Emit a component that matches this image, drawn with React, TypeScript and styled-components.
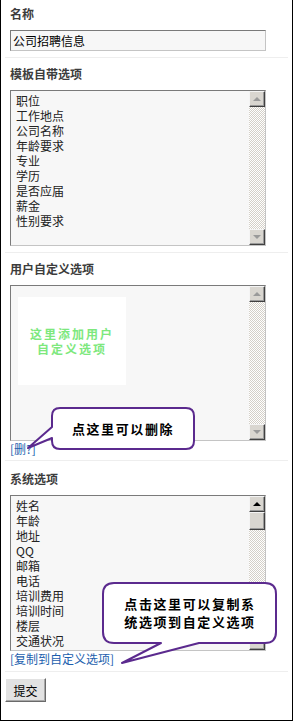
import { createGlobalStyle, styled } from 'styled-components';

const GlobalStyle = createGlobalStyle`
    html, body {
        margin: 0;
        padding: 0;
        background: #ffffff;
    }
    body {
        font-family: "Noto Sans CJK SC", "Noto Sans", sans-serif;
        font-size: 12px;
        color: #222;
    }
`;

const PURPLE = '#5b2a8e';

const Frame = styled.div`
    position: relative;
    box-sizing: border-box;
    width: 293px;
    height: 721px;
    border: 1px solid #000;
    border-top: none;
    padding: 0 4px;
    overflow: hidden;
`;

const Section = styled.div<{ $top?: number; $bottom?: number }>`
    padding: ${(p) => p.$top ?? 8}px 5px ${(p) => p.$bottom ?? 6}px;
    border-bottom: 1px solid #eeeeee;
`;

const Label = styled.div`
    font-size: 12px;
    line-height: 16px;
    font-weight: 700;
    color: #3c3c3c;
    margin-bottom: 8px;
`;

const TextInput = styled.div`
    box-sizing: border-box;
    width: 256px;
    height: 21px;
    padding: 0 2px;
    border: 1px solid #7a7a7a;
    border-right-color: #c4c4c4;
    border-bottom-color: #c4c4c4;
    background: #f7f7f7;
    font-size: 12px;
    line-height: 19px;
    color: #000;
`;

const ListBox = styled.div`
    box-sizing: border-box;
    display: flex;
    width: 256px;
    height: 156px;
    border: 1px solid #7a7a7a;
    border-right-color: #c4c4c4;
    border-bottom-color: #c4c4c4;
    background: #f7f7f7;
`;

const ListContent = styled.div<{ $pad?: string }>`
    flex: 1;
    overflow: hidden;
    padding: ${(p) => p.$pad ?? '2px 0 0 5px'};
`;

const ListItem = styled.div`
    font-size: 12px;
    line-height: 15px;
    color: #222;
    white-space: nowrap;
`;

const ScrollBar = styled.div`
    display: flex;
    flex-direction: column;
    width: 16px;
    flex: none;
`;

const ScrollButton = styled.div<{ $dir: 'up' | 'down'; $active?: boolean }>`
    box-sizing: border-box;
    width: 16px;
    height: 16px;
    flex: none;
    display: flex;
    align-items: center;
    justify-content: center;
    background: #d9d6d0;
    border: 1px solid #f4f4f4;
    border-right-color: #404040;
    border-bottom-color: #404040;
    box-shadow: inset -1px -1px 0 #9a9a9a;

    &::after {
        content: '';
        width: 0;
        height: 0;
        border-left: 4px solid transparent;
        border-right: 4px solid transparent;
        ${(p) => (p.$dir === 'up' ? 'border-bottom' : 'border-top')}: 4px solid
            ${(p) => (p.$active ? '#000' : '#9a9a9a')};
    }
`;

const ScrollTrack = styled.div`
    flex: 1;
    background-color: #ffffff;
    background-image: repeating-conic-gradient(#d4d0c8 0 25%, #ffffff 0 50%);
    background-size: 2px 2px;
`;

const ScrollThumb = styled.div`
    box-sizing: border-box;
    height: 18px;
    flex: none;
    background: #d9d6d0;
    border: 1px solid #f4f4f4;
    border-right-color: #404040;
    border-bottom-color: #404040;
    box-shadow: inset -1px -1px 0 #9a9a9a;
`;

const HintBox = styled.div`
    width: 108px;
    height: 88px;
    background: #ffffff;
    display: flex;
    align-items: center;
    justify-content: center;
    text-align: center;
    font-size: 12px;
    line-height: 15px;
    font-weight: 700;
    letter-spacing: 2px;
    color: #7de87d;
`;

const ActionLink = styled.a`
    display: block;
    margin-top: 1px;
    font-size: 12px;
    line-height: 14px;
    color: #1d5fae;
    text-decoration: none;
    cursor: pointer;
`;

const ButtonRow = styled.div`
    padding-top: 6px;
`;

const SubmitButton = styled.button`
    box-sizing: border-box;
    width: 41px;
    height: 24px;
    padding: 0;
    background: #e2e2e2;
    border: 1px solid #ffffff;
    border-right-color: #6a6a6a;
    border-bottom-color: #6a6a6a;
    box-shadow: inset -1px -1px 0 #a8a8a8;
    font-family: "Noto Sans CJK SC", sans-serif;
    font-size: 12px;
    color: #000;
`;

const BubbleShape = styled.svg`
    position: absolute;
    overflow: visible;
    pointer-events: none;
`;

const BubbleText = styled.div<{ $left: number; $top: number; $width: number; $height: number }>`
    position: absolute;
    left: ${(p) => p.$left}px;
    top: ${(p) => p.$top}px;
    width: ${(p) => p.$width}px;
    height: ${(p) => p.$height}px;
    display: flex;
    flex-direction: column;
    align-items: center;
    justify-content: center;
    font-size: 13px;
    line-height: 18px;
    font-weight: 700;
    letter-spacing: 1.6px;
    color: #000;
    white-space: nowrap;
`;

function Scroll({ active, thumb }: { active?: boolean; thumb?: boolean }) {
    return (
        <ScrollBar>
            <ScrollButton $dir="up" $active={active} />
            {thumb && <ScrollThumb />}
            <ScrollTrack />
            <ScrollButton $dir="down" $active={active} />
        </ScrollBar>
    );
}

function Callout({
    x,
    y,
    w,
    h,
    d,
    lines,
    text,
}: {
    x: number;
    y: number;
    w: number;
    h: number;
    d: string;
    lines: string[];
    text: { left: number; top: number; width: number; height: number };
}) {
    return (
        <>
            <BubbleShape
                style={{ left: x, top: y, width: w, height: h }}
                viewBox={`${x} ${y} ${w} ${h}`}
            >
                <path d={d} fill="#fff" stroke={PURPLE} strokeWidth={2} strokeLinejoin="round" />
            </BubbleShape>
            <BubbleText $left={text.left} $top={text.top} $width={text.width} $height={text.height}>
                {lines.map((l) => (
                    <span key={l}>{l}</span>
                ))}
            </BubbleText>
        </>
    );
}

const templateItems = ['职位', '工作地点', '公司名称', '年龄要求', '专业', '学历', '是否应届', '薪金', '性别要求'];
const systemItems = ['姓名', '年龄', '地址', 'QQ', '邮箱', '电话', '培训费用', '培训时间', '楼层', '交通状况'];

export default function App() {
    return (
        <>
            <GlobalStyle />
            <Frame>
                <Section $top={6}>
                    <Label>名称</Label>
                    <TextInput>公司招聘信息</TextInput>
                </Section>

                <Section>
                    <Label>模板自带选项</Label>
                    <ListBox>
                        <ListContent>
                            {templateItems.map((item) => (
                                <ListItem key={item}>{item}</ListItem>
                            ))}
                        </ListContent>
                        <Scroll />
                    </ListBox>
                </Section>

                <Section $bottom={4}>
                    <Label>用户自定义选项</Label>
                    <ListBox>
                        <ListContent $pad="11px 0 0 7px">
                            <HintBox>
                                这里添加用户
                                <br />
                                自定义选项
                            </HintBox>
                        </ListContent>
                        <Scroll />
                    </ListBox>
                    <ActionLink>[删?]</ActionLink>
                </Section>

                <Section $top={10} $bottom={5}>
                    <Label>系统选项</Label>
                    <ListBox>
                        <ListContent>
                            {systemItems.map((item) => (
                                <ListItem key={item}>{item}</ListItem>
                            ))}
                        </ListContent>
                        <Scroll active thumb />
                    </ListBox>
                    <ActionLink>[复制到自定义选项]</ActionLink>
                </Section>

                <ButtonRow>
                    <SubmitButton>提交</SubmitButton>
                </ButtonRow>

                <Callout
                    x={20}
                    y={404}
                    w={178}
                    h={50}
                    d="M 59 408 H 185 Q 193 408 193 416 V 441 Q 193 449 185 449 H 59 Q 51 449 51 441 V 438 L 27 448 L 51 427 V 416 Q 51 408 59 408 Z"
                    lines={['点这里可以删除']}
                    text={{ left: 51, top: 408, width: 142, height: 41 }}
                />
                <Callout
                    x={100}
                    y={580}
                    w={180}
                    h={88}
                    d="M 113 583 H 264 Q 275 583 275 594 V 632 Q 275 643 264 643 H 198 L 121 663 L 160 643 H 113 Q 102 643 102 632 V 594 Q 102 583 113 583 Z"
                    lines={['点击这里可以复制系', '统选项到自定义选项']}
                    text={{ left: 104, top: 583, width: 170, height: 60 }}
                />
            </Frame>
        </>
    );
}
